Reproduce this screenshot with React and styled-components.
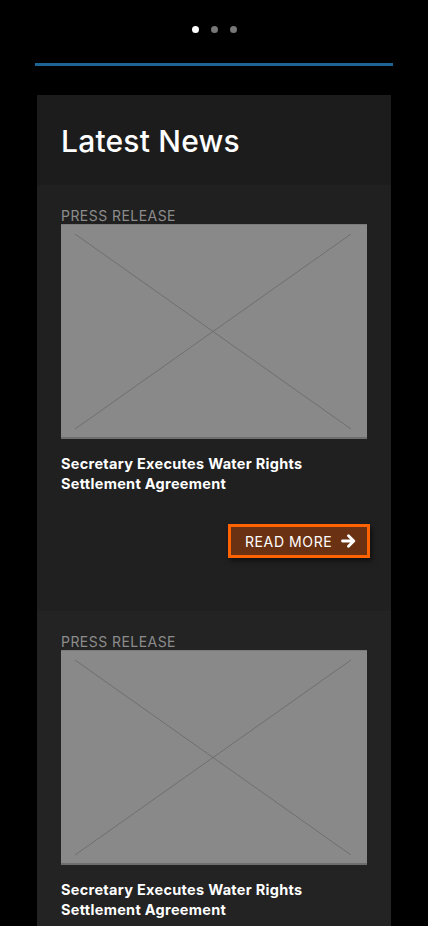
import React from "react";
import styled, { createGlobalStyle } from "styled-components";

const Global = createGlobalStyle`
  html, body { margin: 0; padding: 0; background: #000; }
  body { font-family: Inter, "Open Sans", Arial, sans-serif; -webkit-font-smoothing: antialiased; }
  * { box-sizing: border-box; }
`;

const Page = styled.div`
  width: 428px;
  min-height: 926px;
  background: #000;
  display: flex;
  flex-direction: column;
  align-items: center;
  padding-top: 26px;
  overflow: hidden;
`;

const Dots = styled.div`
  display: flex;
  gap: 12px;
  height: 7px;
`;

const Dot = styled.span`
  width: 7px;
  height: 7px;
  border-radius: 50%;
  background: ${(p) => (p.$active ? "#ffffff" : "#777777")};
`;

const Rule = styled.div`
  width: 358px;
  height: 3px;
  background: #1d6494;
  margin-top: 30px;
`;

const Panel = styled.section`
  width: 354px;
  margin-top: 29px;
  background: #1c1c1c;
  display: flex;
  flex-direction: column;
`;

const PanelHeader = styled.header`
  height: 90px;
  padding: 0 24px;
  display: flex;
  align-items: center;
`;

const Heading = styled.h2`
  margin: 0;
  font-family: Inter, "Noto Sans", sans-serif;
  font-weight: 500;
  font-size: 30px;
  letter-spacing: 0.2px;
  color: #ffffff;
  padding-top: 2px;
`;

const Card = styled.article`
  background: ${(p) => p.$bg};
  padding: 22px 24px 53px;
  display: flex;
  flex-direction: column;
`;

const Label = styled.div`
  font-family: Inter, "Noto Sans", sans-serif;
  font-size: 14px;
  line-height: 17px;
  color: #8c8c8c;
  text-transform: uppercase;
  letter-spacing: 0.45px;
`;

const Placeholder = styled.div`
  width: 306px;
  height: 215px;
  background: #898989;
  border-top: 1px solid #7a7a7a;
  border-bottom: 2px solid #6e6e6e;
  svg { display: block; }
`;

const Title = styled.h3`
  margin: 15px 0 0;
  font-family: Inter, "Noto Sans", sans-serif;
  font-weight: 700;
  font-size: 14.5px;
  line-height: 20px;
  letter-spacing: 0.3px;
  color: #ffffff;
`;

const Actions = styled.div`
  display: flex;
  justify-content: flex-end;
  margin-top: 30px;
  margin-right: -3px;
`;

const ReadMore = styled.a`
  display: inline-flex;
  align-items: center;
  gap: 9px;
  height: 34px;
  width: 142px;
  padding: 0 0 0 14px;
  background: #6b3113;
  border: 3px solid #ff6200;
  box-shadow: 2px 3px 5px rgba(0, 0, 0, 0.55);
  color: #ffffff;
  font-family: Inter, "Noto Sans", sans-serif;
  font-size: 14px;
  letter-spacing: 0.6px;
  text-transform: uppercase;
  text-decoration: none;
  cursor: pointer;
`;

const Arrow = () => (
  <svg width="15" height="14" viewBox="0 0 15 14" fill="none">
    <path d="M1.5 7H12.5M7.5 1.8L12.8 7L7.5 12.2" stroke="#fff" strokeWidth="2.8" strokeLinecap="round" strokeLinejoin="round" />
  </svg>
);

const ImageX = () => (
  <Placeholder>
    <svg width="306" height="212" viewBox="0 0 306 212">
      <line x1="14" y1="9" x2="290" y2="204" stroke="#6f6f6f" strokeWidth="1" />
      <line x1="290" y1="9" x2="14" y2="204" stroke="#6f6f6f" strokeWidth="1" />
    </svg>
  </Placeholder>
);

const items = [{ bg: "#202020" }, { bg: "#232323" }];

export default function App() {
  return (
    <>
      <Global />
      <Page>
        <Dots>
          <Dot $active />
          <Dot />
          <Dot />
        </Dots>
        <Rule />
        <Panel>
          <PanelHeader>
            <Heading>Latest News</Heading>
          </PanelHeader>
          {items.map((it, i) => (
            <Card key={i} $bg={it.bg}>
              <Label>Press Release</Label>
              <ImageX />
              <Title>
                Secretary Executes Water Rights
                <br />
                Settlement Agreement
              </Title>
              <Actions>
                <ReadMore>
                  Read More <Arrow />
                </ReadMore>
              </Actions>
            </Card>
          ))}
        </Panel>
      </Page>
    </>
  );
}
